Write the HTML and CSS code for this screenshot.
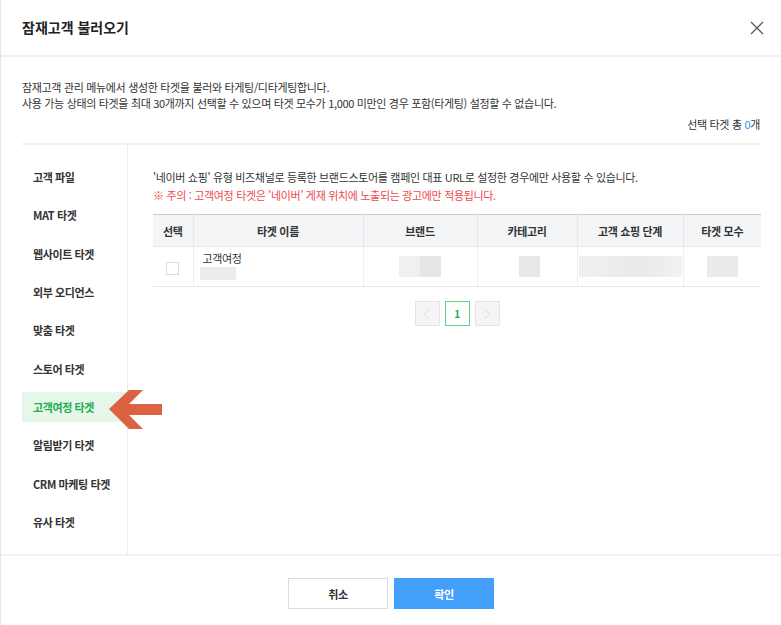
FILE: index.html
```html
<!DOCTYPE html>
<html lang="ko">
<head>
<meta charset="utf-8">
<title>잠재고객 불러오기</title>
<link rel="stylesheet" href="styles.css">
</head>
<body>
<div class="modal">
  <div class="header">
    <h1 class="title">잠재고객 불러오기</h1>
    <button class="close" aria-label="닫기">
      <svg width="14" height="14" viewBox="0 0 14 14"><path d="M1 1 L13 13 M13 1 L1 13" stroke="#555" stroke-width="1.2" fill="none"/></svg>
    </button>
  </div>
  <div class="body">
    <div class="desc">
      <p>잠재고객 관리 메뉴에서 생성한 타겟을 불러와 타게팅/디타게팅합니다.</p>
      <p>사용 가능 상태의 타겟을 최대 30개까지 선택할 수 있으며 타겟 모수가 1,000 미만인 경우 포함(타게팅) 설정할 수 없습니다.</p>
    </div>
    <div class="total">선택 타겟 총 <span class="num">0</span>개</div>
    <div class="content">
      <ul class="side">
        <li class="item">고객 파일</li>
        <li class="item">MAT 타겟</li>
        <li class="item">웹사이트 타겟</li>
        <li class="item">외부 오디언스</li>
        <li class="item">맞춤 타겟</li>
        <li class="item">스토어 타겟</li>
        <li class="item active">고객여정 타겟</li>
        <li class="item">알림받기 타겟</li>
        <li class="item">CRM 마케팅 타겟</li>
        <li class="item">유사 타겟</li>
      </ul>
      <div class="main">
        <p class="notice">'네이버 쇼핑' 유형 비즈채널로 등록한 브랜드스토어를 캠페인 대표 URL로 설정한 경우에만 사용할 수 있습니다.</p>
        <p class="notice warn">※ 주의 : 고객여정 타겟은 '네이버' 게재 위치에 노출되는 광고에만 적용됩니다.</p>
        <table class="tbl">
          <colgroup>
            <col class="c1"><col class="c2"><col class="c3"><col class="c4"><col class="c5"><col class="c6">
          </colgroup>
          <thead>
            <tr><th>선택</th><th>타겟 이름</th><th>브랜드</th><th>카테고리</th><th>고객 쇼핑 단계</th><th>타겟 모수</th></tr>
          </thead>
          <tbody>
            <tr>
              <td class="center"><span class="chk"></span></td>
              <td class="name"><div class="nm">고객여정</div><div class="blur b-id"></div></td>
              <td class="center"><span class="blur b-brand"><i></i><i></i></span></td>
              <td class="cat"><span class="blur b-cat"></span></td>
              <td class="center"><span class="blur b-stage"></span></td>
              <td class="center"><span class="blur b-cnt"></span></td>
            </tr>
          </tbody>
        </table>
        <div class="pager">
          <button class="pg nav" aria-label="이전">
            <svg width="8" height="12" viewBox="0 0 8 12"><path d="M6.5 1 L1.5 6 L6.5 11" stroke="#d8d8dc" stroke-width="1" fill="none"/></svg>
          </button>
          <button class="pg cur">1</button>
          <button class="pg nav" aria-label="다음">
            <svg width="8" height="12" viewBox="0 0 8 12"><path d="M1.5 1 L6.5 6 L1.5 11" stroke="#d8d8dc" stroke-width="1" fill="none"/></svg>
          </button>
        </div>
      </div>
    </div>
  </div>
  <div class="footer">
    <button class="btn cancel">취소</button>
    <button class="btn ok">확인</button>
  </div>
  <svg class="arrow" width="56" height="42" viewBox="0 0 56 42"><polygon points="0,19 20,0 34,0 20,14 53,14 53,25 20,25 34,39 20,39" fill="#dc6241"/></svg>
</div>
</body>
</html>
```

FILE: styles.css
```css
* { box-sizing: border-box; }
html, body { margin: 0; padding: 0; background: #fff; }
body {
  font-family: "Noto Sans CJK KR", "Noto Sans", "Liberation Sans", sans-serif;
  color: #333;
  font-size: 11px;
  letter-spacing: -0.33px;
}
p { margin: 0; }
ul { margin: 0; padding: 0; list-style: none; }
button { font-family: inherit; letter-spacing: inherit; cursor: pointer; }

.modal {
  position: relative;
  width: 781px;
  height: 625px;
  border-left: 1px solid #e4e4ea;
  display: flex;
  flex-direction: column;
}

.header {
  height: 57px;
  padding: 0 17px 0 21px;
  border-bottom: 2px solid #f0f0f2;
  display: flex;
  align-items: center;
  justify-content: space-between;
  flex: none;
}
.title {
  margin: 0;
  font-size: 14px;
  font-weight: 700;
  color: #222;
  letter-spacing: 0;
  padding-bottom: 1px;
}
.close {
  border: 0;
  background: none;
  padding: 0;
  width: 14px;
  height: 14px;
  display: flex;
}

.body {
  padding: 22px 20px 0 21px;
  display: flex;
  flex-direction: column;
  flex: 1;
  min-height: 0;
}
.desc p { line-height: 16px; }
.total {
  text-align: right;
  line-height: 16px;
  margin-top: 5px;
  padding-right: 1px;
}
.total .num { color: #1f8fff; }

.content {
  margin-top: 11px;
  border-top: 2px solid #f0f0f3;
  display: flex;
  flex: 1;
  min-height: 0;
}
.side {
  width: 106px;
  border-right: 1px solid #ececec;
  padding-top: 17px;
  display: flex;
  flex-direction: column;
  gap: 8.33px;
  flex: none;
}
.item {
  height: 30px;
  line-height: 30px;
  padding-left: 11px;
  font-weight: 700;
  font-size: 11px;
  color: #333;
  letter-spacing: -0.4px;
}
.item.active {
  background: #e5f6ea;
  color: #21ad4b;
}

.main {
  flex: 1;
  padding: 23px 0 0 25px;
}
.notice { line-height: 18px; }
.notice.warn { color: #f0484b; }

.tbl {
  margin-top: 10px;
  width: 608px;
  border-collapse: collapse;
  table-layout: fixed;
  border-top: 1px solid #c9cacd;
}
.c1 { width: 40px; }
.c2 { width: 170px; }
.c3 { width: 114px; }
.c4 { width: 100px; }
.c5 { width: 106px; }
.c6 { width: 78px; }
.tbl th {
  height: 32px;
  background: #f4f5f7;
  font-weight: 700;
  font-size: 11px;
  color: #333;
  border-left: 1px solid #e6e7ea;
  border-bottom: 1px solid #e6e7ea;
  padding: 0;
}
.tbl td {
  height: 40px;
  border-left: 1px solid #eeeef0;
  border-bottom: 1px solid #e8e8ea;
  padding: 0;
  vertical-align: middle;
}
.tbl th:first-child, .tbl td:first-child { border-left: 0; }
.center { text-align: center; }
.tbl td.cat { padding-left: 41px; }
.chk {
  display: inline-block;
  width: 13px;
  height: 13px;
  border: 1px solid #dcdcdc;
  background: #fff;
  vertical-align: middle;
  margin-top: 2px;
}
.name { padding: 0 0 0 6px !important; }
.nm { line-height: 16px; padding-left: 3px; margin-top: -3px; }
.blur { display: inline-block; vertical-align: middle; }
.b-id { width: 36px; height: 13px; background: #ececec; margin-top: 1px; display: block; }
.b-brand { width: 42px; height: 21px; display: inline-flex; }
.b-brand i { flex: 1; background: #f0f0f0; }
.b-brand i + i { background: #e6e6e6; }
.b-cat { width: 21px; height: 21px; background: #e8e8e8; }
.b-stage { width: 103px; height: 21px; background: linear-gradient(90deg, #f0f0f0 0%, #ececec 40%, #e9e9e9 60%, #f2f2f2 100%); }
.b-cnt { width: 31px; height: 21px; background: #ebebeb; }

.pager {
  width: 608px;
  margin-top: 14px;
  display: flex;
  justify-content: center;
  gap: 5px;
}
.pg {
  width: 25px;
  height: 25px;
  padding: 0;
  border: 1px solid #e3e3e8;
  background: #f5f5f8;
  display: flex;
  align-items: center;
  justify-content: center;
  font-size: 10px;
  font-weight: 700;
}
.pg.cur {
  border: 1px solid #61d27e;
  background: #fff;
  color: #24a94a;
}

.footer {
  flex: none;
  height: 71px;
  border-top: 2px solid #f3f3f4;
  display: flex;
  justify-content: center;
  gap: 6px;
  padding-top: 22px;
}
.btn {
  width: 100px;
  height: 31px;
  font-size: 11px;
  font-weight: 700;
  padding: 0;
}
.btn.cancel {
  background: #fff;
  border: 1px solid #dcdcdc;
  color: #333;
}
.btn.ok {
  background: #42a0fb;
  border: 1px solid #42a0fb;
  color: #fff;
}

.arrow {
  position: absolute;
  left: 108px;
  top: 390px;
}
```
